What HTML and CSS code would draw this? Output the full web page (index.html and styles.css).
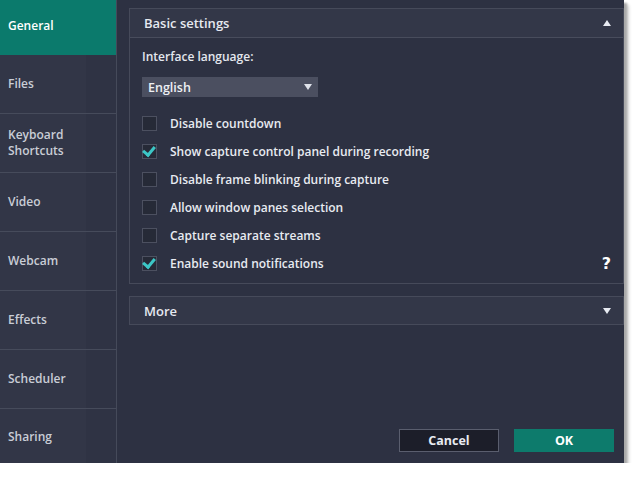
FILE: index.html
```html
<!DOCTYPE html>
<html lang="en">
<head>
    <meta charset="UTF-8">
    <title>Preferences</title>
    <link rel="stylesheet" href="styles.css">
</head>
<body>
    <div class="window">
        <div class="sidebar">
            <div class="tab active">General</div>
            <div class="tab">Files</div>
            <div class="tab">Keyboard<br>Shortcuts</div>
            <div class="tab">Video</div>
            <div class="tab">Webcam</div>
            <div class="tab">Effects</div>
            <div class="tab">Scheduler</div>
            <div class="tab last">Sharing</div>
        </div>

        <div class="main">
            <div class="panel">
                <div class="panel-head">
                    <span>Basic settings</span>
                    <span class="tri up"></span>
                </div>
                <div class="panel-body">
                    <div class="field-label">Interface language:</div>
                    <div class="select">
                        <span>English</span>
                        <span class="tri down small"></span>
                    </div>

                    <div class="checks">
                        <div class="check"><span class="box"></span>Disable countdown</div>
                        <div class="check"><span class="box on"></span>Show capture control panel during recording</div>
                        <div class="check"><span class="box"></span>Disable frame blinking during capture</div>
                        <div class="check"><span class="box"></span>Allow window panes selection</div>
                        <div class="check"><span class="box"></span>Capture separate streams</div>
                        <div class="check"><span class="box on"></span>Enable sound notifications<span class="help">?</span></div>
                    </div>
                </div>
            </div>

            <div class="panel more">
                <div class="panel-head">
                    <span>More</span>
                    <span class="tri down"></span>
                </div>
            </div>

            <div class="buttons">
                <button class="btn cancel">Cancel</button>
                <button class="btn ok">OK</button>
            </div>
        </div>
    </div>
</body>
</html>
```

FILE: styles.css
```css
body {
    margin: 0;
    background: #fff;
    font-family: "Open Sans", "DejaVu Sans", sans-serif;
    font-weight: 600;
    font-size: 12px;
    color: #e4e7ee;
}

.window {
    display: flex;
    width: 624px;
    height: 463px;
    background: #2d3142;
    box-shadow: 3px 3px 2px #a9a9a9, 5px 5px 3px #d6d6d6;
}

/* left tabs */
.sidebar {
    width: 116px;
    border-right: 1px solid #454a5a;
    background: linear-gradient(to right, #323647 74%, #2f3344 74%);
    display: flex;
    flex-direction: column;
}

.tab {
    height: 58px;
    flex-shrink: 0;
    border-bottom: 1px solid #464b5b;
    display: flex;
    align-items: center;
    padding-left: 8px;
    color: #c9cdd6;
    line-height: 16px;
}

.tab.active {
    height: 52px;
    padding-bottom: 3px;
    background: #0b7a6c;
    color: #fff;
    border-bottom: none;
}

.tab.last {
    border-bottom: none;
    flex: 1;
    padding-top: 2px;
}

/* right side */
.main {
    flex: 1;
    display: flex;
    flex-direction: column;
    padding: 8px 0 11px 12px;
}

.panel {
    border: 1px solid #464a5a;
}

.panel-head {
    height: 28px;
    background: #333748;
    display: flex;
    align-items: center;
    justify-content: space-between;
    padding: 0 12px 0 14px;
    font-size: 13px;
    color: #e6e9f0;
}

.panel-body {
    border-top: 1px solid #484c5c;
    padding: 8px 12px 6px 12px;
}

.field-label {
    line-height: 22px;
}

.select {
    width: 164px;
    height: 20px;
    margin-top: 9px;
    background: #4b4f60;
    display: flex;
    align-items: center;
    justify-content: space-between;
    padding: 0 6px;
    font-size: 12.5px;
    color: #eef0f4;
}

.tri {
    width: 0;
    height: 0;
    border-left: 4px solid transparent;
    border-right: 4px solid transparent;
}

.tri.up {
    border-bottom: 6px solid #e8ebf2;
}

.tri.down {
    border-top: 6px solid #e8ebf2;
}

.tri.small {
    border-top-color: #dfe2ea;
}

.checks {
    margin-top: 12px;
}

.check {
    height: 28px;
    display: flex;
    align-items: center;
    color: #e8ebf1;
}

.box {
    width: 13px;
    height: 13px;
    border: 1px solid #4c5060;
    background: #262a37;
    margin-right: 13px;
    position: relative;
}

.box.on::after {
    content: "";
    position: absolute;
    left: 2px;
    top: -1px;
    width: 5px;
    height: 9px;
    border-right: 3px solid #3cc6c6;
    border-bottom: 3px solid #3cc6c6;
    transform: rotate(40deg);
}

.help {
    margin-left: auto;
    font-family: "DejaVu Sans", sans-serif;
    font-weight: 700;
    font-size: 16px;
    color: #fff;
}

.more {
    margin-top: 12px;
}

.more .panel-head {
    height: 27px;
}

.buttons {
    margin-top: auto;
    display: flex;
    justify-content: flex-end;
    gap: 15px;
    padding-right: 10px;
}

.btn {
    width: 100px;
    height: 23px;
    font-family: inherit;
    font-weight: 700;
    font-size: 12.5px;
    color: #e8ebf1;
    border: none;
    padding: 0;
}

.btn.cancel {
    background: #1c1e29;
    border: 1px solid #5a5e6e;
}

.btn.ok {
    background: #0d7b6c;
    color: #fff;
}
```
